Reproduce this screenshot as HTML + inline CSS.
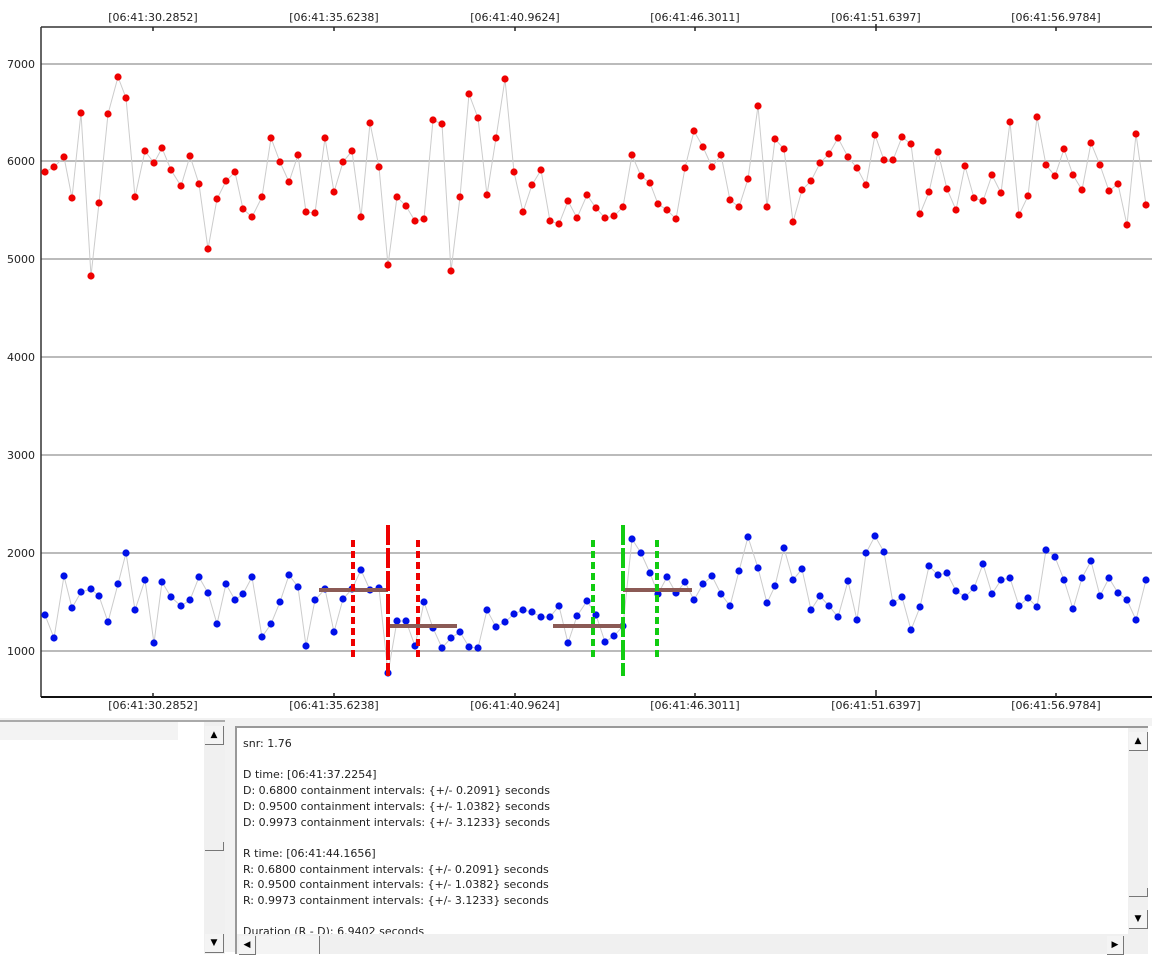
<!DOCTYPE html>
<html><head><meta charset="utf-8"><style>
body{margin:0;width:1152px;height:952px;background:#fff;overflow:hidden;font-family:Tahoma,"DejaVu Sans","Liberation Sans",sans-serif;position:relative}
.lbl{font-size:11px;fill:#222;font-family:"DejaVu Sans","Liberation Sans",sans-serif}
#lp{position:absolute;left:0;top:720px;width:225px;height:232px;background:#fff;border-top:2px solid #aaa}
#rp{position:absolute;left:235px;top:726px;width:911px;height:226px;border:2px solid #999;border-right:none;border-bottom:none;background:#fff}
.txt{position:absolute;left:6px;top:8px;font-size:11px;line-height:15.7px;color:#222;font-family:"DejaVu Sans","Liberation Sans",sans-serif;white-space:pre}
.sb{position:absolute;background:#f0f0f0}
.btn{position:absolute;width:18px;height:18px;background:#f4f4f4;border-right:1px solid #777;border-bottom:1px solid #777;font-size:9px;text-align:center;line-height:18px;color:#000}
</style></head><body>
<svg width="1152" height="718" style="position:absolute;left:0;top:0">
<defs>
<marker id="r" markerWidth="8" markerHeight="8" refX="4" refY="4" markerUnits="userSpaceOnUse"><circle cx="4" cy="4" r="3.6" fill="#e00"/></marker>
<marker id="b" markerWidth="8" markerHeight="8" refX="4" refY="4" markerUnits="userSpaceOnUse"><circle cx="4" cy="4" r="3.6" fill="#0010e8"/></marker>
</defs>
<rect x="0" y="0" width="1152" height="718" fill="#fff"/>
<g stroke="#bbb" stroke-width="2">
<line x1="41" y1="64" x2="1152" y2="64"/><line x1="41" y1="161" x2="1152" y2="161"/><line x1="41" y1="259" x2="1152" y2="259"/><line x1="41" y1="357" x2="1152" y2="357"/><line x1="41" y1="455" x2="1152" y2="455"/><line x1="41" y1="553" x2="1152" y2="553"/><line x1="41" y1="651" x2="1152" y2="651"/>
</g>
<line x1="41" y1="27" x2="1152" y2="27" stroke="#333" stroke-width="1.5"/>
<line x1="41" y1="27" x2="41" y2="697" stroke="#333" stroke-width="1.5"/>
<line x1="41" y1="697" x2="1152" y2="697" stroke="#111" stroke-width="2"/>
<g stroke="#222" stroke-width="1.5">
<line x1="153" y1="693" x2="153" y2="697"/><line x1="334" y1="693" x2="334" y2="697"/><line x1="515" y1="693" x2="515" y2="697"/><line x1="695" y1="693" x2="695" y2="697"/><line x1="876" y1="690" x2="876" y2="697"/><line x1="1056" y1="693" x2="1056" y2="697"/>
<line x1="153" y1="27" x2="153" y2="31"/><line x1="334" y1="27" x2="334" y2="31"/><line x1="515" y1="27" x2="515" y2="31"/><line x1="695" y1="27" x2="695" y2="31"/><line x1="876" y1="24" x2="876" y2="31"/><line x1="1056" y1="27" x2="1056" y2="31"/>
</g>
<g class="lbl" text-anchor="middle">
<text x="153" y="21">[06:41:30.2852]</text><text x="334" y="21">[06:41:35.6238]</text><text x="515" y="21">[06:41:40.9624]</text><text x="695" y="21">[06:41:46.3011]</text><text x="876" y="21">[06:41:51.6397]</text><text x="1056" y="21">[06:41:56.9784]</text>
<text x="153" y="709">[06:41:30.2852]</text><text x="334" y="709">[06:41:35.6238]</text><text x="515" y="709">[06:41:40.9624]</text><text x="695" y="709">[06:41:46.3011]</text><text x="876" y="709">[06:41:51.6397]</text><text x="1056" y="709">[06:41:56.9784]</text>
</g>
<g class="lbl" text-anchor="end">
<text x="35" y="68">7000</text><text x="35" y="165">6000</text><text x="35" y="263">5000</text><text x="35" y="361">4000</text><text x="35" y="459">3000</text><text x="35" y="557">2000</text><text x="35" y="655">1000</text>
</g>
<polyline fill="none" stroke="#ccc" stroke-width="1" marker-start="url(#r)" marker-mid="url(#r)" marker-end="url(#r)" points="45,172 54,167 64,157 72,198 81,113 91,276 99,203 108,114 118,77 126,98 135,197 145,151 154,163 162,148 171,170 181,186 190,156 199,184 208,249 217,199 226,181 235,172 243,209 252,217 262,197 271,138 280,162 289,182 298,155 306,212 315,213 325,138 334,192 343,162 352,151 361,217 370,123 379,167 388,265 397,197 406,206 415,221 424,219 433,120 442,124 451,271 460,197 469,94 478,118 487,195 496,138 505,79 514,172 523,212 532,185 541,170 550,221 559,224 568,201 577,218 587,195 596,208 605,218 614,216 623,207 632,155 641,176 650,183 658,204 667,210 676,219 685,168 694,131 703,147 712,167 721,155 730,200 739,207 748,179 758,106 767,207 775,139 784,149 793,222 802,190 811,181 820,163 829,154 838,138 848,157 857,168 866,185 875,135 884,160 893,160 902,137 911,144 920,214 929,192 938,152 947,189 956,210 965,166 974,198 983,201 992,175 1001,193 1010,122 1019,215 1028,196 1037,117 1046,165 1055,176 1064,149 1073,175 1082,190 1091,143 1100,165 1109,191 1118,184 1127,225 1136,134 1146,205"/>
<polyline fill="none" stroke="#ccc" stroke-width="1" marker-start="url(#b)" marker-mid="url(#b)" marker-end="url(#b)" points="45,615 54,638 64,576 72,608 81,592 91,589 99,596 108,622 118,584 126,553 135,610 145,580 154,643 162,582 171,597 181,606 190,600 199,577 208,593 217,624 226,584 235,600 243,594 252,577 262,637 271,624 280,602 289,575 298,587 306,646 315,600 325,589 334,632 343,599 352,589 361,570 370,590 379,588 388,673 397,621 406,621 415,646 424,602 433,628 442,648 451,638 460,632 469,647 478,648 487,610 496,627 505,622 514,614 523,610 532,612 541,617 550,617 559,606 568,643 577,616 587,601 596,615 605,642 614,636 623,626 632,539 641,553 650,573 658,594 667,577 676,593 685,582 694,600 703,584 712,576 721,594 730,606 739,571 748,537 758,568 767,603 775,586 784,548 793,580 802,569 811,610 820,596 829,606 838,617 848,581 857,620 866,553 875,536 884,552 893,603 902,597 911,630 920,607 929,566 938,575 947,573 956,591 965,597 974,588 983,564 992,594 1001,580 1010,578 1019,606 1028,598 1037,607 1046,550 1055,557 1064,580 1073,609 1082,578 1091,561 1100,596 1109,578 1118,593 1127,600 1136,620 1146,580"/>
<g stroke="#8b5a55" stroke-width="4">
<line x1="319" y1="590" x2="388" y2="590"/><line x1="388" y1="626" x2="457" y2="626"/><line x1="553" y1="626" x2="623" y2="626"/><line x1="623" y1="590" x2="692" y2="590"/>
</g>
<g stroke-width="4">
<line x1="353" y1="540" x2="353" y2="660" stroke="#e00" stroke-dasharray="7,4"/>
<line x1="418" y1="540" x2="418" y2="660" stroke="#e00" stroke-dasharray="7,4"/>
<line x1="388" y1="525" x2="388" y2="676" stroke="#e00" stroke-dasharray="20,3"/>
<line x1="593" y1="540" x2="593" y2="660" stroke="#1c1" stroke-dasharray="7,4"/>
<line x1="657" y1="540" x2="657" y2="660" stroke="#1c1" stroke-dasharray="7,4"/>
<line x1="623" y1="525" x2="623" y2="676" stroke="#1c1" stroke-dasharray="20,3"/>
</g>
</svg>
<div style="position:absolute;left:0;top:718px;width:1152px;height:8px;background:#f2f2f2"></div>
<div id="lp">
<div style="position:absolute;left:0;top:0;width:178px;height:18px;background:#f3f3f3"></div>
<div class="sb" style="left:204px;top:0;width:21px;height:232px"></div>
<div class="btn" style="left:205px;top:4px">▲</div>
<div style="position:absolute;left:205px;top:120px;width:18px;height:8px;border-right:1px solid #777;border-bottom:1px solid #777"></div>
<div class="btn" style="left:205px;top:212px">▼</div>
</div>
<div style="position:absolute;left:225px;top:720px;width:10px;height:232px;background:#f2f2f2"></div>
<div id="rp">
<div class="txt">snr: 1.76

D time: [06:41:37.2254]
D: 0.6800 containment intervals: {+/- 0.2091} seconds
D: 0.9500 containment intervals: {+/- 1.0382} seconds
D: 0.9973 containment intervals: {+/- 3.1233} seconds

R time: [06:41:44.1656]
R: 0.6800 containment intervals: {+/- 0.2091} seconds
R: 0.9500 containment intervals: {+/- 1.0382} seconds
R: 0.9973 containment intervals: {+/- 3.1233} seconds

Duration (R - D): 6.9402 seconds</div>
<div class="sb" style="left:891px;top:0;width:20px;height:226px"></div>
<div class="btn" style="left:892px;top:4px">▲</div>
<div style="position:absolute;left:892px;top:160px;width:18px;height:8px;border-right:1px solid #777;border-bottom:1px solid #777"></div>
<div class="btn" style="left:892px;top:182px">▼</div>
<div class="sb" style="left:0;top:206px;width:891px;height:20px"></div>
<div class="btn" style="left:2px;top:208px;width:16px">◀</div>
<div style="position:absolute;left:20px;top:208px;width:62px;height:18px;border-right:1px solid #777;background:#f4f4f4"></div>
<div class="btn" style="left:870px;top:208px;width:16px">▶</div>
</div>
</body></html>
